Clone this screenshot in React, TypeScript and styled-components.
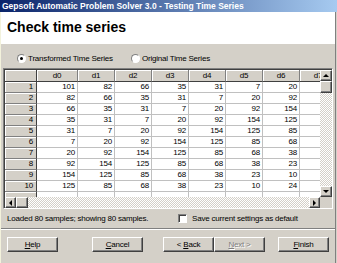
import React from "react";
import styled, { createGlobalStyle, css } from "styled-components";

const GlobalStyle = createGlobalStyle`
  html, body {
    margin: 0;
    padding: 0;
  }
  body {
    width: 337px;
    height: 263px;
    overflow: hidden;
    background: #d4d0c8;
    font-family: "Liberation Sans", Arial, sans-serif;
    font-size: 8px;
    letter-spacing: -0.2px;
    color: #000;
  }
`;

const series = [101, 82, 66, 35, 31, 7, 20, 92, 154, 125, 85, 68, 38, 23, 10, 24, 36];
const columns = ["d0", "d1", "d2", "d3", "d4", "d5", "d6", "d7"];

const raised = css`
  background: #d4d0c8;
  border: 1px solid;
  border-color: #fff #404040 #404040 #fff;
  box-shadow: inset -1px -1px #808080;
  box-sizing: border-box;
`;

const dither = css`
  background: repeating-conic-gradient(#fff 0 25%, #d4d0c8 0 50%) 0 0 / 2px 2px;
`;

const Window = styled.div`
  width: 337px;
  height: 263px;
  display: flex;
  flex-direction: column;
`;

const TitleBar = styled.div`
  height: 12px;
  line-height: 12px;
  padding-left: 2px;
  background: linear-gradient(to right, #0a246a, #a6caf0);
  color: #fff;
  font-weight: bold;
  font-size: 8.5px;
  letter-spacing: 0;
  white-space: nowrap;
`;

const Frame = styled.div`
  flex: 1;
  display: flex;
  flex-direction: column;
  border-left: 1px solid #f3f2dc;
  border-right: 1px solid #808080;
  margin-right: 1px;
`;

const Header = styled.div`
  height: 32px;
  background: #fff;
  display: flex;
  align-items: center;
  padding: 0 0 2px 6px;
  box-sizing: border-box;
`;

const Heading = styled.h1`
  margin: 0;
  font-size: 14px;
  font-weight: bold;
  letter-spacing: 0;
`;

const RadioRow = styled.div`
  height: 24px;
  padding: 4px 0 0 16px;
  box-sizing: border-box;
  display: flex;
  align-items: center;
  gap: 18px;
`;

const Option = styled.label`
  display: flex;
  align-items: center;
  gap: 2px;
  white-space: nowrap;
`;

const RadioDot = styled.span<{ $checked?: boolean }>`
  width: 9px;
  height: 9px;
  border-radius: 50%;
  background: #fff;
  box-sizing: border-box;
  border: 1px solid;
  border-color: #808080 #fff #fff #808080;
  display: flex;
  align-items: center;
  justify-content: center;
  &::after {
    content: "";
    width: 3px;
    height: 3px;
    border-radius: 50%;
    background: ${(p) => (p.$checked ? "#000" : "transparent")};
  }
`;

const GridFrame = styled.div`
  margin: 0 2px 0 2px;
  height: 141px;
  box-sizing: border-box;
  border: 1px solid;
  border-color: #808080 #fff #fff #808080;
  box-shadow: inset 1px 1px #404040;
  padding: 1px 0 0 1px;
  display: grid;
  grid-template-columns: 1fr 12px;
  grid-template-rows: 1fr 11px;
`;

const Viewport = styled.div`
  overflow: hidden;
  background: #fff;
`;

const Table = styled.div`
  display: grid;
  grid-template-columns: 32px 41px repeat(7, 37px);
  grid-template-rows: 12px;
  grid-auto-rows: 11px;
`;

type CellKind = "corner" | "col" | "row" | "data";

const Cell = styled.div<{ $kind: CellKind }>`
  box-sizing: border-box;
  overflow: hidden;
  white-space: nowrap;
  ${(p) =>
    p.$kind === "data"
      ? css`
          background: #fff;
          border-right: 1px solid #c0c0c0;
          border-bottom: 1px solid #c0c0c0;
          text-align: right;
          padding-right: 2px;
          line-height: 10px;
        `
      : css`
          background: #d4d0c8;
          box-shadow: inset 1px 1px #fff;
          border-right: 1px solid ${p.$kind === "row" || p.$kind === "corner" ? "#404040" : "#808080"};
          border-bottom: 1px solid ${p.$kind === "col" || p.$kind === "corner" ? "#404040" : "#808080"};
          text-align: ${p.$kind === "row" ? "right" : "center"};
          padding-right: ${p.$kind === "row" ? "3px" : "0"};
          line-height: ${p.$kind === "row" ? "10px" : "11px"};
        `}
`;

const VScroll = styled.div`
  display: flex;
  flex-direction: column;
`;

const HScroll = styled.div`
  display: flex;
`;

const ScrollTrack = styled.div`
  flex: 1;
  ${dither};
`;

const ArrowButton = styled.div<{ $w: number; $h: number }>`
  ${raised};
  width: ${(p) => p.$w}px;
  height: ${(p) => p.$h}px;
  display: flex;
  align-items: center;
  justify-content: center;
  flex: none;
`;

const Corner = styled.div`
  background: #d4d0c8;
`;

const StatusRow = styled.div`
  height: 19px;
  display: grid;
  grid-template-columns: 171px 1fr;
  align-items: center;
  padding: 0 0 0 6px;
`;

const CheckBox = styled.span`
  width: 9px;
  height: 9px;
  background: #fff;
  box-sizing: border-box;
  border: 1px solid;
  border-color: #808080 #fff #fff #808080;
  box-shadow: inset 1px 1px #404040;
  margin-right: 3px;
`;

const Separator = styled.div`
  height: 0;
  border-top: 1px solid #808080;
  border-bottom: 1px solid #fff;
`;

const ButtonRow = styled.div`
  display: flex;
  padding: 7px 0 0 6px;
`;

const Button = styled.div<{ $space?: number; $disabled?: boolean }>`
  ${raised};
  width: 51px;
  height: 15px;
  margin-left: ${(p) => p.$space ?? 0}px;
  display: flex;
  align-items: center;
  justify-content: center;
  white-space: nowrap;
  color: ${(p) => (p.$disabled ? "#808080" : "#000")};
  text-shadow: ${(p) => (p.$disabled ? "1px 1px #fff" : "none")};
  u {
    text-decoration-thickness: 1px;
  }
`;

const Arrow = ({ dir }: { dir: "up" | "down" | "left" | "right" }) => {
  const pts = {
    up: "0,3 3,0 6,3",
    down: "0,0 3,3 6,0",
    left: "3,0 0,3 3,6",
    right: "0,0 3,3 0,6",
  }[dir];
  const vertical = dir === "up" || dir === "down";
  return (
    <svg width={vertical ? 6 : 4} height={vertical ? 4 : 6} viewBox={vertical ? "0 0 6 4" : "0 0 4 6"}>
      <polygon points={pts} fill="#000" />
    </svg>
  );
};

export default function App() {
  const rows = Array.from({ length: 10 }, (_, i) => i);
  return (
    <>
      <GlobalStyle />
      <Window>
        <TitleBar>Gepsoft Automatic Problem Solver 3.0 - Testing Time Series</TitleBar>
        <Frame>
          <Header>
            <Heading>Check time series</Heading>
          </Header>
          <RadioRow>
            <Option>
              <RadioDot $checked />
              Transformed Time Series
            </Option>
            <Option>
              <RadioDot />
              Original Time Series
            </Option>
          </RadioRow>
          <GridFrame>
            <Viewport>
              <Table>
                <Cell $kind="corner" />
                {columns.map((c) => (
                  <Cell key={c} $kind="col">
                    {c}
                  </Cell>
                ))}
                {rows.map((r) => (
                  <React.Fragment key={r}>
                    <Cell $kind="row">{r + 1}</Cell>
                    {columns.map((c, j) => (
                      <Cell key={c} $kind="data">
                        {series[r + j]}
                      </Cell>
                    ))}
                  </React.Fragment>
                ))}
                <Cell $kind="row" />
                {columns.map((c) => (
                  <Cell key={c} $kind="data" />
                ))}
              </Table>
            </Viewport>
            <VScroll>
              <ArrowButton $w={12} $h={11}>
                <Arrow dir="up" />
              </ArrowButton>
              <ArrowButton $w={12} $h={12} />
              <ScrollTrack />
              <ArrowButton $w={12} $h={11}>
                <Arrow dir="down" />
              </ArrowButton>
            </VScroll>
            <HScroll>
              <ArrowButton $w={11} $h={11}>
                <Arrow dir="left" />
              </ArrowButton>
              <ArrowButton $w={12} $h={11} />
              <ScrollTrack />
              <ArrowButton $w={11} $h={11}>
                <Arrow dir="right" />
              </ArrowButton>
            </HScroll>
            <Corner />
          </GridFrame>
          <StatusRow>
            <span>Loaded 80 samples; showing 80 samples.</span>
            <Option>
              <CheckBox />
              Save current settings as default
            </Option>
          </StatusRow>
          <Separator />
          <ButtonRow>
            <Button>
              <u>H</u>elp
            </Button>
            <Button $space={34}>
              <u>C</u>ancel
            </Button>
            <Button $space={20}>
              &lt;&nbsp;<u>B</u>ack
            </Button>
            <Button $disabled>
              <u>N</u>ext&nbsp;&gt;
            </Button>
            <Button $space={13}>
              <u>F</u>inish
            </Button>
          </ButtonRow>
        </Frame>
      </Window>
    </>
  );
}
